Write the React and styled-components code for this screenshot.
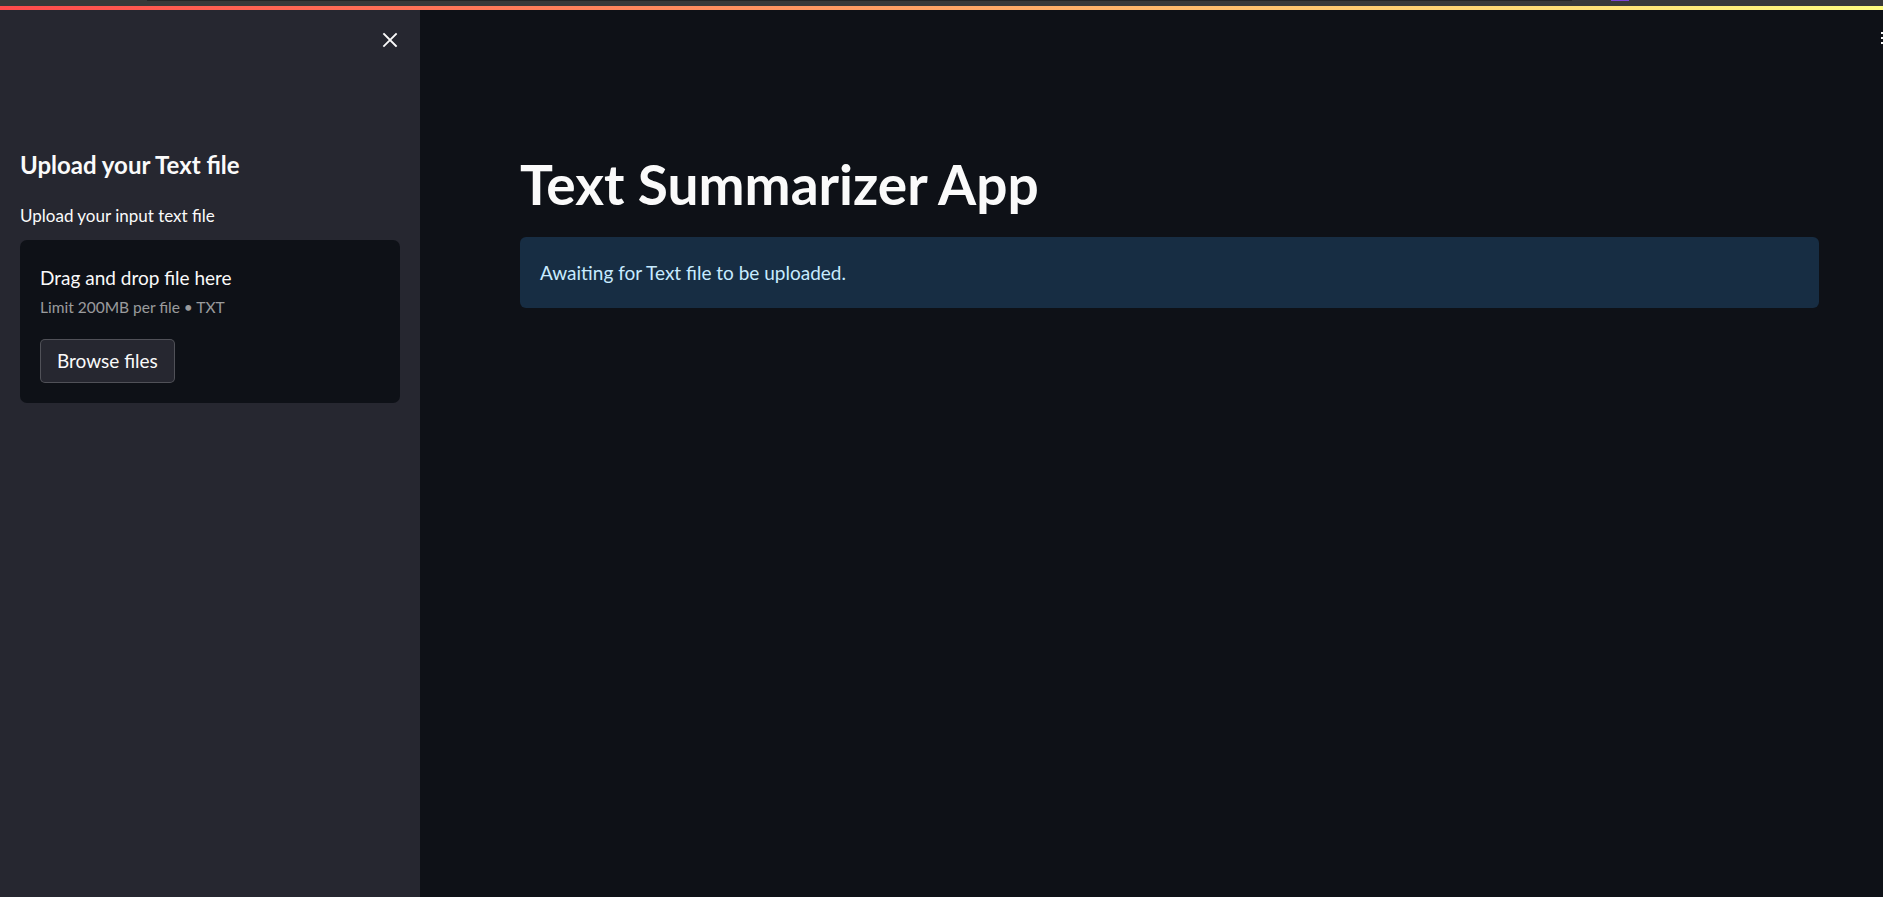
import React from "react";
import styled, { createGlobalStyle } from "styled-components";

const Global = createGlobalStyle`
  html, body { margin: 0; padding: 0; height: 100%; background: #0e1117; }
  #root { height: 100%; }
  * { box-sizing: border-box; }
  body { font-family: Lato, "Open Sans", sans-serif; color: #fafafa; overflow: hidden; }
`;

const Page = styled.div`
  width: 1883px;
  height: 897px;
  display: flex;
  flex-direction: column;
  position: relative;
  overflow: hidden;
`;

const Chrome = styled.div`
  height: 6px;
  background: #393939;
  position: relative;
  flex: none;
`;

const ChromeBar = styled.div`
  position: absolute;
  top: 0;
  left: ${(p) => p.$left}px;
  width: ${(p) => p.$width}px;
  height: ${(p) => p.$h}px;
  background: ${(p) => p.$color};
`;

const Decoration = styled.div`
  height: 4px;
  flex: none;
  background: linear-gradient(90deg, rgb(255, 75, 75), rgb(255, 253, 128));
`;

const Body = styled.div`
  flex: 1;
  display: flex;
  min-height: 0;
`;

const Sidebar = styled.aside`
  width: 420px;
  flex: none;
  background: #262730;
  display: flex;
  flex-direction: column;
  padding: 0 20px;
`;

const SidebarTop = styled.div`
  height: 60px;
  display: flex;
  justify-content: flex-end;
  align-items: center;
`;

const CloseButton = styled.button`
  background: none;
  border: none;
  padding: 0;
  width: 20px;
  height: 20px;
  display: flex;
  align-items: center;
  justify-content: center;
  color: #fafafa;
  cursor: pointer;
`;

const SideHeading = styled.h2`
  margin: 81px 0 0;
  font-size: 24px;
  font-weight: 700;
  line-height: 1.2;
  color: #fafafa;
`;

const Label = styled.label`
  display: block;
  margin-top: 22px;
  font-size: 17px;
  line-height: 1.6;
  color: #fafafa;
`;

const DropZone = styled.section`
  margin-top: 11px;
  background: #0e1117;
  border-radius: 7px;
  padding: 24px 20px 20px;
  display: flex;
  flex-direction: column;
`;

const DropTitle = styled.div`
  font-size: 19px;
  line-height: 1.5;
  margin-bottom: 4px;
  color: #fafafa;
`;

const DropHint = styled.div`
  font-size: 15.5px;
  line-height: 1.5;
  color: rgba(250, 250, 250, 0.6);
`;

const BrowseButton = styled.button`
  margin-top: 19px;
  align-self: flex-start;
  height: 44px;
  padding: 0 16px;
  background: #262730;
  border: 1px solid rgba(250, 250, 250, 0.2);
  border-radius: 5px;
  color: #fafafa;
  font-family: inherit;
  font-size: 19px;
`;

const Main = styled.main`
  flex: 1;
  position: relative;
  padding: 0 64px 0 100px;
`;

const Title = styled.h1`
  margin: 141px 0 0;
  font-size: 55px;
  font-weight: 700;
  line-height: 1.2;
  color: #fafafa;
`;

const Info = styled.div`
  margin-top: 20px;
  background: #172d43;
  border-radius: 6px;
  padding: 20px;
  font-size: 19px;
  line-height: 31px;
  color: #c7ebff;
`;

const Kebab = styled.div`
  position: absolute;
  right: 0;
  top: 22px;
  display: flex;
  flex-direction: column;
  gap: 3px;
`;

const Dot = styled.span`
  width: 2px;
  height: 2px;
  background: #fafafa;
`;

export default function App() {
  return (
    <>
      <Global />
      <Page>
        <Chrome>
          <ChromeBar $left={147} $width={1425} $h={1} $color="#262626" />
          <ChromeBar $left={1611} $width={18} $h={1} $color="#7b44d6" />
        </Chrome>
        <Decoration />
        <Body>
          <Sidebar>
            <SidebarTop>
              <CloseButton aria-label="Close sidebar">
                <svg width="16" height="16" viewBox="0 0 16 16" fill="none">
                  <path d="M2 2L14 14M14 2L2 14" stroke="#fafafa" strokeWidth="1.8" strokeLinecap="square" />
                </svg>
              </CloseButton>
            </SidebarTop>
            <SideHeading>Upload your Text file</SideHeading>
            <Label>Upload your input text file</Label>
            <DropZone>
              <DropTitle>Drag and drop file here</DropTitle>
              <DropHint>Limit 200MB per file • TXT</DropHint>
              <BrowseButton>Browse files</BrowseButton>
            </DropZone>
          </Sidebar>
          <Main>
            <Title>Text Summarizer App</Title>
            <Info>Awaiting for Text file to be uploaded.</Info>
            <Kebab>
              <Dot />
              <Dot />
              <Dot />
            </Kebab>
          </Main>
        </Body>
      </Page>
    </>
  );
}
